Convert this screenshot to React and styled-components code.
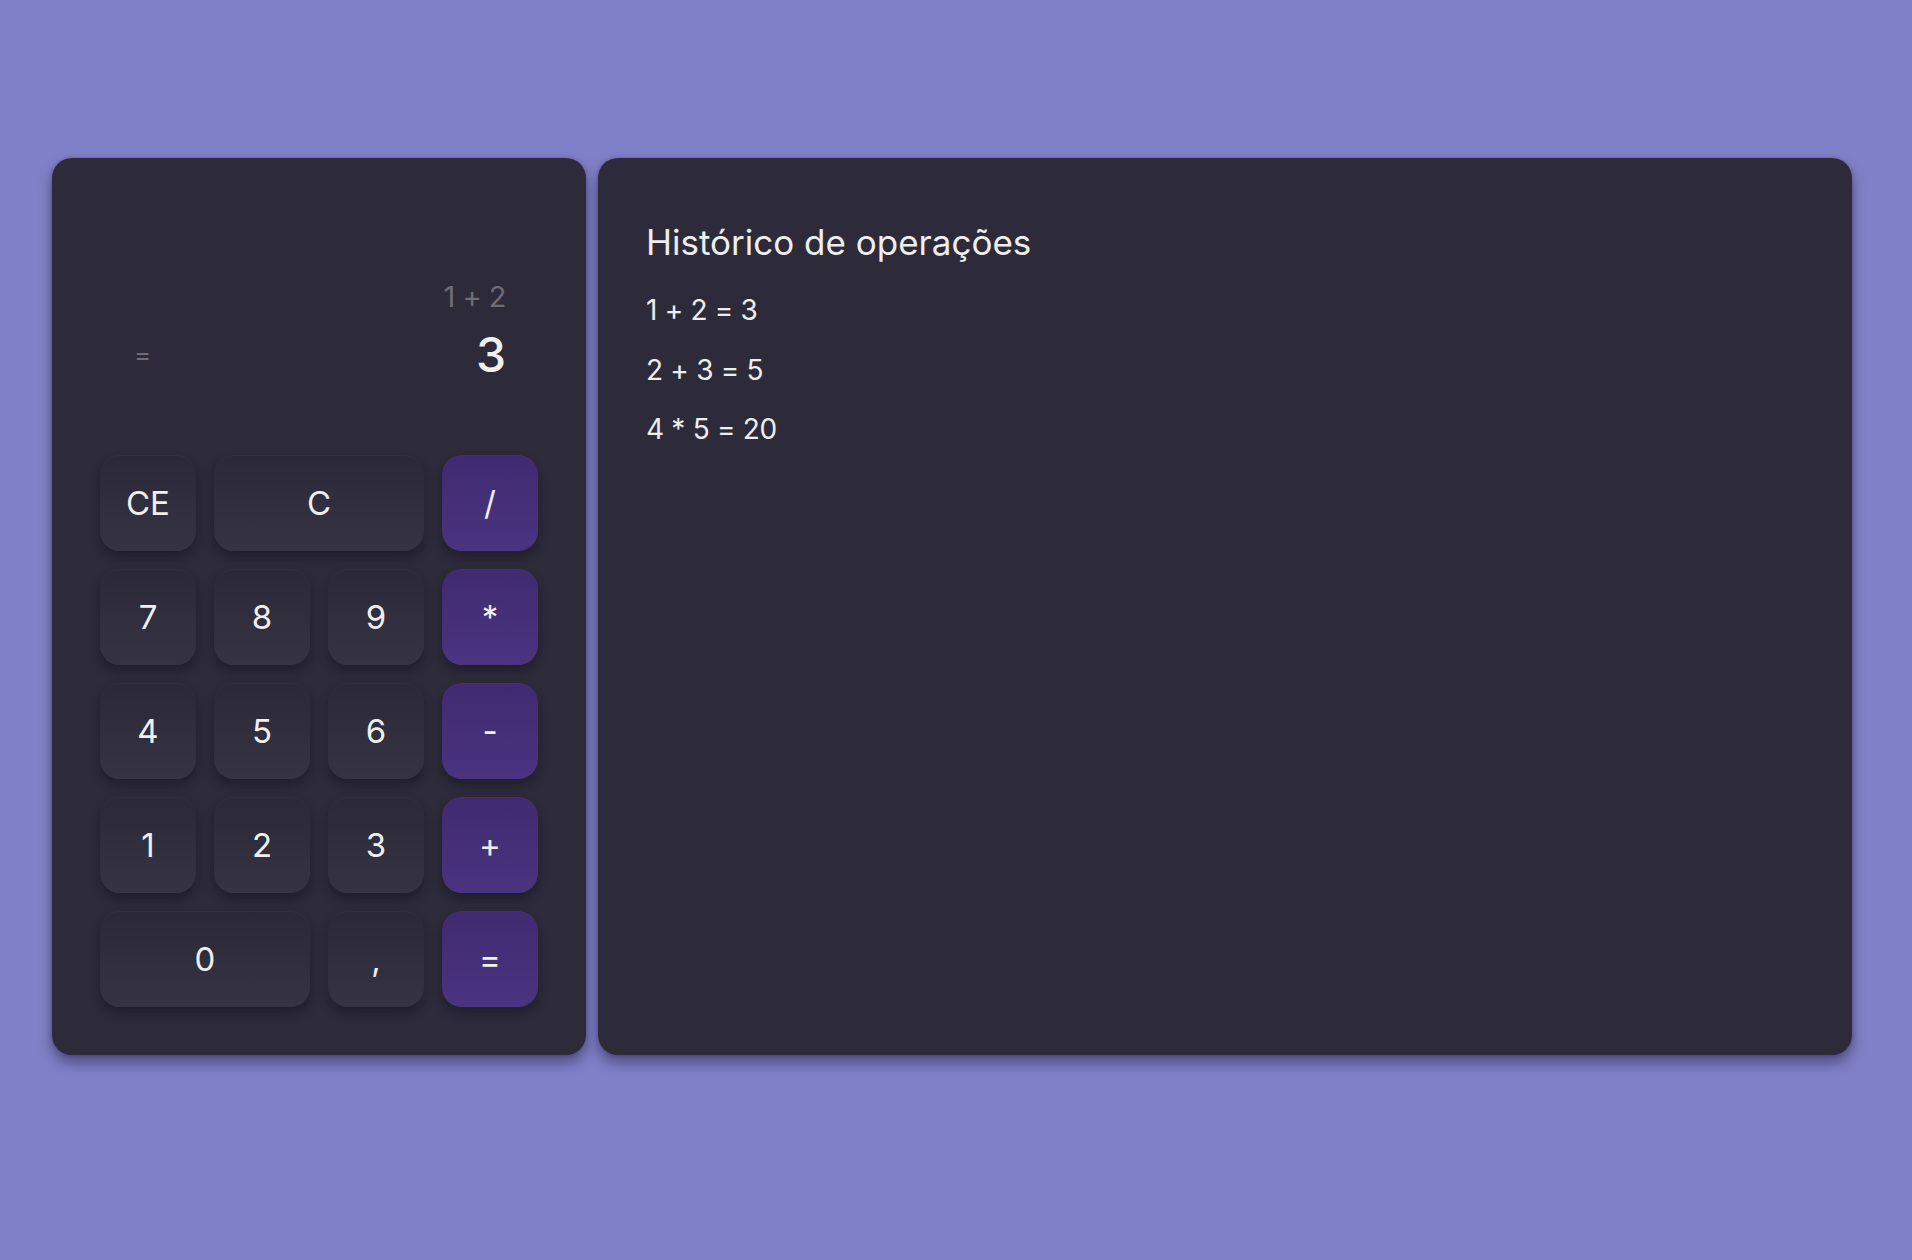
import React from "react";
import styled, { createGlobalStyle } from "styled-components";

const GlobalStyle = createGlobalStyle`
  * { box-sizing: border-box; }
  html, body {
    margin: 0;
    padding: 0;
    background: #8080c9;
    font-family: Inter, "Noto Sans", sans-serif;
  }
`;

const Page = styled.main`
  display: flex;
  gap: 12px;
  padding: 158px 60px 0 52px;
  min-height: 1260px;
  align-items: flex-start;
`;

const Card = styled.section`
  background: #2d2b3a;
  border-radius: 20px;
  box-shadow: 0 8px 14px rgba(20, 18, 40, 0.45), 0 0 4px rgba(20, 18, 40, 0.2);
  height: 897px;
`;

const Calculator = styled(Card)`
  width: 534px;
  flex: none;
  padding: 48px;
  display: flex;
  flex-direction: column;
`;

const Display = styled.div`
  height: 231px;
  margin-bottom: 18px;
  padding: 0 32px 0 34px;
  display: flex;
  flex-direction: column;
  justify-content: center;
  color: #eeeeee;
`;

const Expression = styled.div`
  text-align: right;
  font-size: 29px;
  line-height: 36px;
  color: #6e6d74;
  margin-top: 18px;
  letter-spacing: -0.5px;
`;

const ResultRow = styled.div`
  display: flex;
  justify-content: space-between;
  align-items: center;
  margin-top: 12px;
`;

const Operator = styled.span`
  font-size: 26px;
  color: #6e6d78;
`;

const Result = styled.span`
  font-size: 48px;
  line-height: 56px;
  font-weight: 500;
  color: #f0f0f0;
`;

const Keypad = styled.div`
  display: grid;
  grid-template-columns: repeat(4, 96px);
  grid-auto-rows: 96px;
  gap: 18px;
`;

const Key = styled.button`
  grid-column: span ${(p) => p.$span || 1};
  border: none;
  border-radius: 20px;
  font-family: inherit;
  font-size: 33px;
  color: #efefef;
  cursor: pointer;
  display: flex;
  align-items: center;
  justify-content: center;
  padding: 0;
  background: ${(p) =>
    p.$op
      ? "linear-gradient(180deg, #402a70 0%, #4a3480 100%)"
      : "linear-gradient(180deg, #2b2937 0%, #363342 100%)"};
  box-shadow: 0 6px 10px rgba(10, 8, 20, 0.35), inset 0 1px 0 rgba(255, 255, 255, 0.03);
`;

const History = styled(Card)`
  flex: 1;
  padding: 62px 48px 40px;
  color: #eeeeee;
`;

const Title = styled.h2`
  margin: 0 0 17px;
  font-size: 35px;
  font-weight: 400;
  line-height: 44px;
`;

const Entry = styled.p`
  margin: 0;
  font-size: 28px;
  line-height: 59.5px;
  letter-spacing: -0.3px;
`;

const keys = [
  { label: "CE" },
  { label: "C", span: 2 },
  { label: "/", op: true },
  { label: "7" },
  { label: "8" },
  { label: "9" },
  { label: "*", op: true },
  { label: "4" },
  { label: "5" },
  { label: "6" },
  { label: "-", op: true },
  { label: "1" },
  { label: "2" },
  { label: "3" },
  { label: "+", op: true },
  { label: "0", span: 2 },
  { label: "," },
  { label: "=", op: true },
];

const history = ["1 + 2 = 3", "2 + 3 = 5", "4 * 5 = 20"];

export default function App() {
  return (
    <>
      <GlobalStyle />
      <Page>
        <Calculator>
          <Display>
            <Expression>1 + 2</Expression>
            <ResultRow>
              <Operator>=</Operator>
              <Result>3</Result>
            </ResultRow>
          </Display>
          <Keypad>
            {keys.map((k) => (
              <Key key={k.label} $span={k.span} $op={k.op}>
                {k.label}
              </Key>
            ))}
          </Keypad>
        </Calculator>
        <History>
          <Title>Histórico de operações</Title>
          {history.map((h) => (
            <Entry key={h}>{h}</Entry>
          ))}
        </History>
      </Page>
    </>
  );
}
